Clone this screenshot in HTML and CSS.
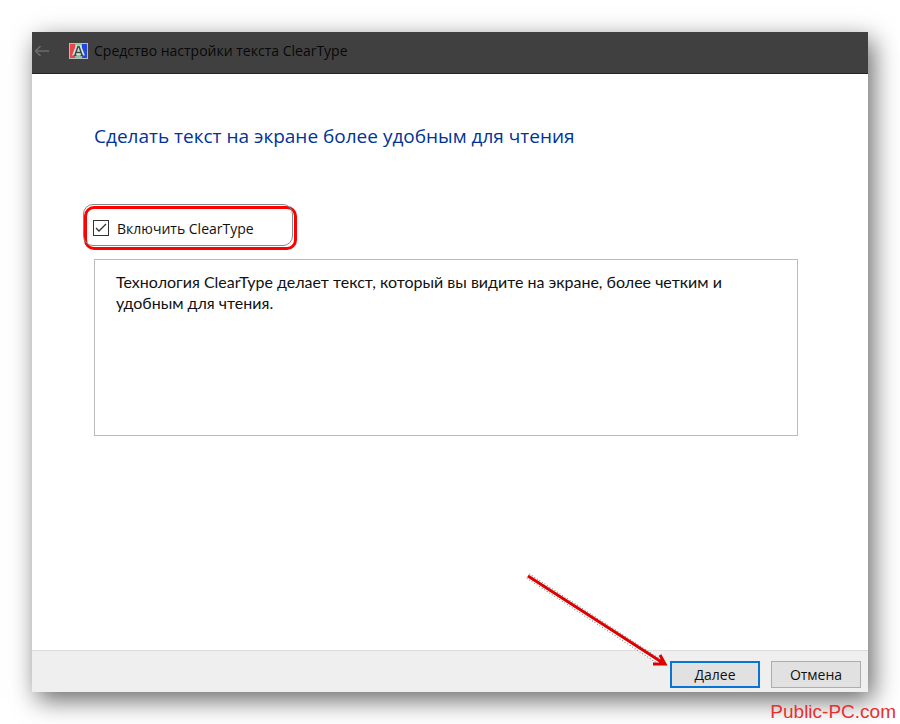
FILE: index.html
```html
<!DOCTYPE html>
<html lang="ru">
<head>
  <meta charset="UTF-8" />
  <meta name="viewport" content="width=device-width, initial-scale=1.0"/>
  <title>Средство настройки текста ClearType</title>
  <link rel="stylesheet" href="styles.css">
</head>
<body>

  <div class="wizard">
    <header class="titlebar">
      <button class="back" type="button" aria-label="Назад">
        <svg width="16" height="12" viewBox="0 0 16 12" fill="none" stroke="#6c6c6c" stroke-width="1.5">
          <path d="M15 6H1.5M6.5 1L1.5 6l5 5"/>
        </svg>
      </button>
      <svg class="app-icon" width="19" height="16" viewBox="0 0 19 16">
        <path fill="#b9bcc0" d="M0 0h19v16H0z"/>
        <path fill="#e8484c" d="M1 1h5v14H1z"/>
        <path fill="#7cd090" d="M6 1h7v14H6z"/>
        <path fill="#2448dc" d="M13 1h5v14h-5z"/>
        <path fill="none" stroke="#d4e6de" stroke-width="4" d="M5 13L8.500 4h2L14 13M6 10h7"/>
        <path fill="none" stroke="#414749" stroke-width="1.500" d="M6 12L9 3.500h1L13 12M7 9.500h5M4.500 12.500h3M11.500 12.500h3"/>
      </svg>
      <span class="title">Средство настройки текста ClearType</span>
    </header>

    <main class="content">
      <h1>Сделать текст на экране более удобным для чтения</h1>
      <div class="option">
        <input type="checkbox" id="cleartype" checked>
        <label for="cleartype">Включить ClearType</label>
      </div>
      <p class="description">Технология ClearType делает текст, который вы видите на экране, более четким и удобным для чтения.</p>
    </main>

    <footer class="actions">
      <div class="next">
        <svg class="arrow" width="144" height="98" viewBox="0 0 144 98" fill="none">
          <path stroke="#777" stroke-width="6" stroke-dasharray="1 2" d="M2 4L134 90"/>
          <path stroke="#fff" stroke-width="4" d="M2 4L134 90"/>
          <path stroke="#dc0000" stroke-width="3" d="M2 4L137 91M134 83l5 9-12 0"/>
        </svg>
        <button class="btn primary" type="button">Далее</button>
      </div>
      <button class="btn" type="button">Отмена</button>
    </footer>
  </div>

  <a class="watermark" href="#">Public-PC.com</a>

</body>
</html>
```

FILE: styles.css
```css
* {
  box-sizing: border-box;
}

body {
  position: relative;
  margin: 0;
  padding: 32px;
  min-height: 100vh;
  display: flex;
  background: #fff;
  color: #111;
  font-family: 'Open Sans', 'Noto Sans', sans-serif;
  font-size: 14px;
}

.wizard {
  flex: 1;
  display: flex;
  flex-direction: column;
  background: #fff;
  box-shadow: 5px 8px 24px rgba(0, 0, 0, 0.6);
}

.titlebar {
  display: flex;
  align-items: center;
  height: 42px;
  padding: 0 2px 4px;
  background: #404040;
  border-bottom: 1px solid #222;
}

.back {
  display: flex;
  padding: 0;
  border: none;
  background: none;
}

.app-icon {
  margin: 0 6px 0 19px;
}

.title {
  color: #080808;
}

.content {
  flex: 1;
  padding: 48px 70px 48px 62px;
}

h1 {
  margin: 0;
  color: #003399;
  font-size: 19px;
  font-weight: 400;
  line-height: 28px;
}

.option {
  position: relative;
  display: flex;
  align-items: center;
  gap: 8px;
  width: 213px;
  margin: 56px 0 9px -10px;
  padding: 0 9px;
  height: 44px;
}

/* hand-marked frame around the option */
.option::before,
.option::after {
  content: '';
  position: absolute;
  pointer-events: none;
}

.option::before {
  inset: 0;
  border: 3px solid #f00;
  border-radius: 10px;
}

.option::after {
  inset: -2px 4px 4px -1px;
  border: 1px solid #888;
  border-radius: 10px;
}

.option input {
  appearance: none;
  width: 16px;
  height: 16px;
  margin: 0;
  border: 1px solid #333;
  background: #fff;
}

.option input:checked {
  background: url("data:image/svg+xml,%3Csvg xmlns='http://www.w3.org/2000/svg' viewBox='0 0 14 14'%3E%3Cpath d='M2 7l3 3 7-7' fill='none' stroke='%23333' stroke-width='1.300'/%3E%3C/svg%3E") center / 14px no-repeat;
}

.description {
  min-height: 177px;
  margin: 0;
  padding: 11px 21px;
  border: 1px solid #bbb;
  font-family: Lato, 'Noto Sans', sans-serif;
  font-size: 16px;
  line-height: 21px;
}

.actions {
  display: flex;
  justify-content: flex-end;
  gap: 11px;
  padding: 10px 7px 4px;
  background: #efefef;
  border-top: 1px solid #ddd;
}

.next {
  position: relative;
}

.arrow {
  position: absolute;
  right: 90px;
  bottom: 18px;
}

.btn {
  width: 90px;
  height: 27px;
  padding: 0;
  border: 1px solid #adadad;
  background: #e1e1e1;
  color: #111;
  font: inherit;
}

.btn.primary {
  border: 2px solid #0874d8;
}

.watermark {
  position: absolute;
  right: 4px;
  bottom: 0;
  color: #e8302f;
  font-family: 'Liberation Sans', sans-serif;
  font-size: 19px;
  line-height: 24px;
  text-decoration: none;
}
```
